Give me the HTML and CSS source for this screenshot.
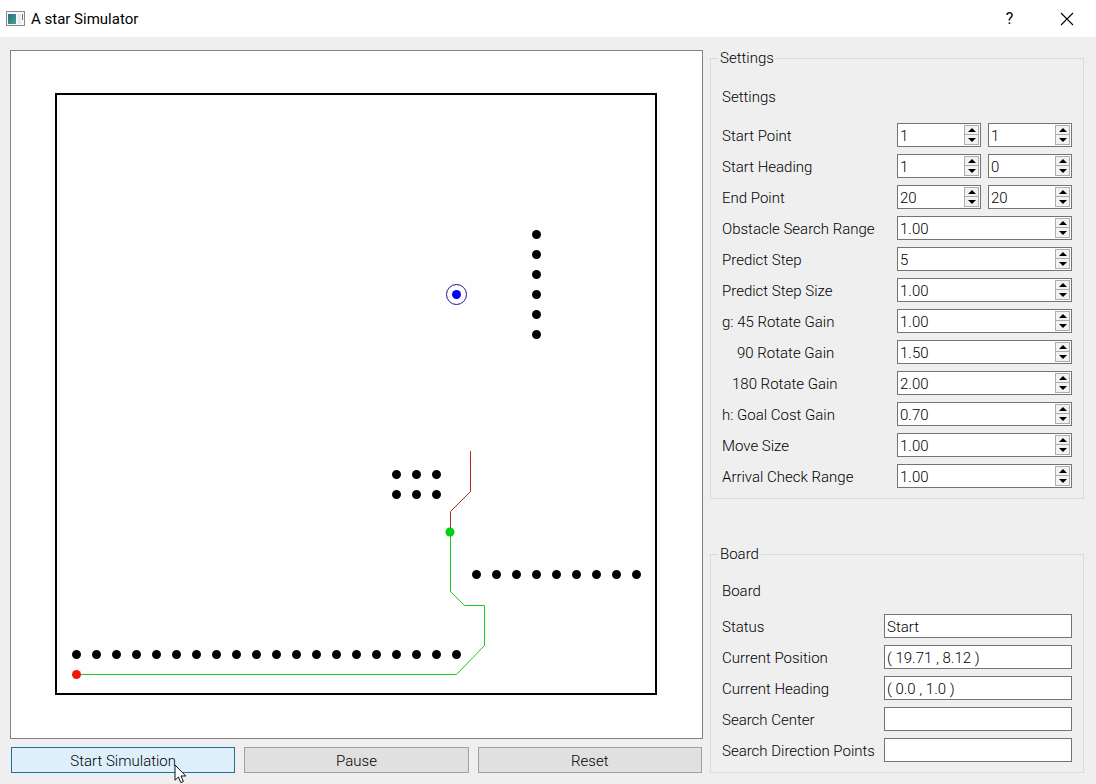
FILE: index.html
```html
<!DOCTYPE html>
<html lang="en">
<head>
<meta charset="utf-8">
<title>A star Simulator</title>
<link rel="stylesheet" href="styles.css">
</head>
<body>
<header class="titlebar">
  <svg class="app-icon" width="20" height="16" viewBox="0 0 20 16" aria-hidden="true">
    <defs><linearGradient id="pane" x1="0" y1="0" x2="1" y2="1"><stop offset="0" stop-color="#2f6690"/><stop offset="1" stop-color="#45a583"/></linearGradient></defs>
    <rect x="0.5" y="0.5" width="18" height="14" fill="#f6f8f9" stroke="#87898b"/>
    <rect x="2" y="3" width="8" height="10" fill="url(#pane)"/>
    <rect x="12" y="3" width="3" height="10" fill="#e4eaef"/>
    <rect x="16" y="3" width="1" height="6" fill="#4b7f9c"/>
  </svg>
  <h1 class="title">A star Simulator</h1>
  <button class="window-button help" type="button" aria-label="Help">?</button>
  <button class="window-button" type="button" aria-label="Close">
    <svg width="14" height="14" viewBox="0 0 14 14" aria-hidden="true"><path d="M1 1L13 13M13 1L1 13" stroke="#000" stroke-width="1.1" fill="none"/></svg>
  </button>
</header>
<main class="window">
  <section class="simulation">
    <div class="view">
      <svg class="scene" viewBox="0 0 691 687" role="img" aria-label="Path planning board">
        <g transform="translate(45 643)">
          <rect class="bounds" x="0" y="-600" width="600" height="600"/>
          <g class="obstacles">
            <path d="M20.5 -39.5H401"/>
            <path d="M420.5 -119.5H581"/>
            <path d="M340.5 -199.5H381"/>
            <path d="M340.5 -219.5H381"/>
            <path d="M480.5 -459.5V-359"/>
          </g>
          <path class="travelled" d="M20.5 -19.5H400.5L428.5 -48.5V-88.5H408.5L394.5 -102.5V-162"/>
          <path class="predicted" d="M394.5 -162V-182.5L414.5 -202.5V-243"/>
          <circle class="start" cx="20.5" cy="-19.5" r="4.5"/>
          <circle class="current" cx="394" cy="-162" r="4.5"/>
          <circle class="goal-ring" cx="400.5" cy="-399.5" r="10"/>
          <circle class="goal" cx="400.5" cy="-399.5" r="4.5"/>
        </g>
      </svg>
    </div>
    <div class="actions">
      <button class="action hovered" type="button">Start Simulation
        <svg class="cursor" width="13" height="20" viewBox="0 0 13 20" aria-hidden="true"><path d="M1 1V16.2L4.4 13L6.8 18.6L9.4 17.5L7 12H11.8Z" fill="#fff" stroke="#111" stroke-width="1"/></svg>
      </button>
      <button class="action" type="button">Pause</button>
      <button class="action" type="button">Reset</button>
    </div>
  </section>
  <aside class="panels">
    <fieldset class="group settings">
      <legend>Settings</legend>
      <div class="heading">Settings</div>
      <div class="rows">
        <div class="row"><label for="sx">Start Point</label>
          <div class="spin"><input id="sx" type="number" value="1"><button class="up" type="button" aria-label="Increase"></button><button class="down" type="button" aria-label="Decrease"></button></div>
          <div class="spin"><input aria-label="Start Point Y" type="number" value="1"><button class="up" type="button" aria-label="Increase"></button><button class="down" type="button" aria-label="Decrease"></button></div></div>
        <div class="row"><label for="hx">Start Heading</label>
          <div class="spin"><input id="hx" type="number" value="1"><button class="up" type="button" aria-label="Increase"></button><button class="down" type="button" aria-label="Decrease"></button></div>
          <div class="spin"><input aria-label="Start Heading Y" type="number" value="0"><button class="up" type="button" aria-label="Increase"></button><button class="down" type="button" aria-label="Decrease"></button></div></div>
        <div class="row"><label for="ex">End Point</label>
          <div class="spin"><input id="ex" type="number" value="20"><button class="up" type="button" aria-label="Increase"></button><button class="down" type="button" aria-label="Decrease"></button></div>
          <div class="spin"><input aria-label="End Point Y" type="number" value="20"><button class="up" type="button" aria-label="Increase"></button><button class="down" type="button" aria-label="Decrease"></button></div></div>
        <div class="row"><label for="range">Obstacle Search Range</label>
          <div class="spin"><input id="range" type="number" step="0.01" value="1.00"><button class="up" type="button" aria-label="Increase"></button><button class="down" type="button" aria-label="Decrease"></button></div></div>
        <div class="row"><label for="step">Predict Step</label>
          <div class="spin"><input id="step" type="number" value="5"><button class="up" type="button" aria-label="Increase"></button><button class="down" type="button" aria-label="Decrease"></button></div></div>
        <div class="row"><label for="stepsize">Predict Step Size</label>
          <div class="spin"><input id="stepsize" type="number" step="0.01" value="1.00"><button class="up" type="button" aria-label="Increase"></button><button class="down" type="button" aria-label="Decrease"></button></div></div>
        <div class="row"><label for="g45">g: 45 Rotate Gain</label>
          <div class="spin"><input id="g45" type="number" step="0.01" value="1.00"><button class="up" type="button" aria-label="Increase"></button><button class="down" type="button" aria-label="Decrease"></button></div></div>
        <div class="row"><label class="indent-two-digit" for="g90">90 Rotate Gain</label>
          <div class="spin"><input id="g90" type="number" step="0.01" value="1.50"><button class="up" type="button" aria-label="Increase"></button><button class="down" type="button" aria-label="Decrease"></button></div></div>
        <div class="row"><label class="indent-three-digit" for="g180">180 Rotate Gain</label>
          <div class="spin"><input id="g180" type="number" step="0.01" value="2.00"><button class="up" type="button" aria-label="Increase"></button><button class="down" type="button" aria-label="Decrease"></button></div></div>
        <div class="row"><label for="goalcost">h: Goal Cost Gain</label>
          <div class="spin"><input id="goalcost" type="number" step="0.01" value="0.70"><button class="up" type="button" aria-label="Increase"></button><button class="down" type="button" aria-label="Decrease"></button></div></div>
        <div class="row"><label for="move">Move Size</label>
          <div class="spin"><input id="move" type="number" step="0.01" value="1.00"><button class="up" type="button" aria-label="Increase"></button><button class="down" type="button" aria-label="Decrease"></button></div></div>
        <div class="row"><label for="arrival">Arrival Check Range</label>
          <div class="spin"><input id="arrival" type="number" step="0.01" value="1.00"><button class="up" type="button" aria-label="Increase"></button><button class="down" type="button" aria-label="Decrease"></button></div></div>
      </div>
    </fieldset>
    <fieldset class="group board">
      <legend>Board</legend>
      <div class="heading">Board</div>
      <div class="rows">
        <div class="row"><label for="status">Status</label><input class="field" id="status" type="text" value="Start"></div>
        <div class="row"><label for="position">Current Position</label><input class="field" id="position" type="text" value="( 19.71 , 8.12 )"></div>
        <div class="row"><label for="heading">Current Heading</label><input class="field" id="heading" type="text" value="( 0.0 , 1.0 )"></div>
        <div class="row"><label for="center">Search Center</label><input class="field" id="center" type="text"></div>
        <div class="row"><label for="directions">Search Direction Points</label><input class="field" id="directions" type="text"></div>
      </div>
    </fieldset>
  </aside>
</main>
</body>
</html>
```
FILE: styles.css
```css
* { box-sizing: border-box; }

body {
  margin: 0;
  min-height: 100vh;
  display: flex;
  flex-direction: column;
  background: #efefef;
  color: #000;
  font: 300 15px/16px Roboto, "Liberation Sans", sans-serif;
}

button, input { font: inherit; color: inherit; }

.titlebar {
  display: flex;
  align-items: center;
  height: 37px;
  padding-left: 6px;
  background: #fff;
}
.app-icon { margin-right: 5px; }
.title {
  flex: 1;
  margin: 0;
  font: 400 15px/20px Roboto, "Open Sans", sans-serif;
}
.window-button {
  display: flex;
  align-items: center;
  justify-content: center;
  width: 57px;
  height: 37px;
  padding: 0 2px 0 0;
  border: 0;
  background: none;
}
.help { font: 400 16px/20px Roboto, "Open Sans", sans-serif; }

.window {
  flex: 1;
  display: grid;
  grid-template-columns: minmax(0, 1fr) 374px;
  gap: 7px;
  padding: 13px 12px 11px 10px;
}

.simulation { display: flex; flex-direction: column; gap: 8px; }
.view {
  flex: 1;
  display: flex;
  min-height: 0;
  border: 1px solid #828282;
  background: #fefefe;
}
.scene { display: block; flex: 1; min-width: 0; }
.bounds { fill: none; stroke: #000; stroke-width: 2; }
.obstacles path {
  fill: none;
  stroke: #000;
  stroke-width: 9;
  stroke-linecap: round;
  stroke-dasharray: 0 20;
}
.travelled { fill: none; stroke: #1fc81f; }
.predicted { fill: none; stroke: #b02a20; }
.start { fill: #f51505; }
.current { fill: #00d010; }
.goal { fill: #0505f5; }
.goal-ring { fill: none; stroke: #15158c; }

.actions {
  display: grid;
  grid-template-columns: repeat(3, 1fr);
  gap: 9px;
  padding: 0 1px;
}
.action {
  position: relative;
  height: 26px;
  padding: 2px 0 0;
  border: 1px solid #a0a0a0;
  background: #e0e0e0;
}
.hovered { border-color: #1b7399; background: #dff0fd; }
.cursor { position: absolute; left: calc(50% + 51px); top: 16px; }

.panels {
  display: flex;
  flex-direction: column;
  justify-content: space-between;
}
.group {
  min-width: 0;
  margin: 0;
  padding: 19px 11px 10px;
  border: 1px solid #dadada;
}
.group legend { margin-left: -4px; padding: 0 2px; }
.heading { line-height: 24px; margin-bottom: 14px; }
.rows { display: grid; grid-template-columns: minmax(0, 1fr); gap: 7px; }
.row { display: flex; height: 24px; gap: 7px; align-items: center; }
.row label { flex: none; width: 168px; padding-top: 2px; white-space: nowrap; }
.row .indent-two-digit { padding-left: 15px; }
.row .indent-three-digit { padding-left: 10px; }

.board { padding-top: 17px; }
.board .heading { margin-bottom: 11px; }
.board .row { gap: 0; }
.board .row label { width: 162px; }

.field {
  flex: 1;
  min-width: 0;
  height: 24px;
  padding: 2px 2px 0;
  border: 1px solid #737373;
  border-radius: 0;
  background: #fff;
}

.spin {
  flex: 1;
  min-width: 0;
  height: 24px;
  display: grid;
  grid-template: 1fr 1fr / 1fr 15px;
  padding: 1px;
  border: 1px solid #737373;
  background: #fff;
}
.spin input {
  grid-row: 1 / 3;
  min-width: 0;
  width: 100%;
  padding: 2px 1px 0;
  border: 0;
  background: none;
  appearance: textfield;
}
.spin input::-webkit-inner-spin-button { display: none; }
.up, .down {
  display: flex;
  align-items: center;
  justify-content: center;
  padding: 0;
  border: 1px solid #adadad;
  background: #f2f2f2;
}
.down { border-top: 0; }
.up::before, .down::before {
  content: "";
  border: solid transparent;
  border-width: 0 4px;
}
.up::before { border-bottom: 4px solid #000; }
.down::before { border-top: 4px solid #000; }
```
